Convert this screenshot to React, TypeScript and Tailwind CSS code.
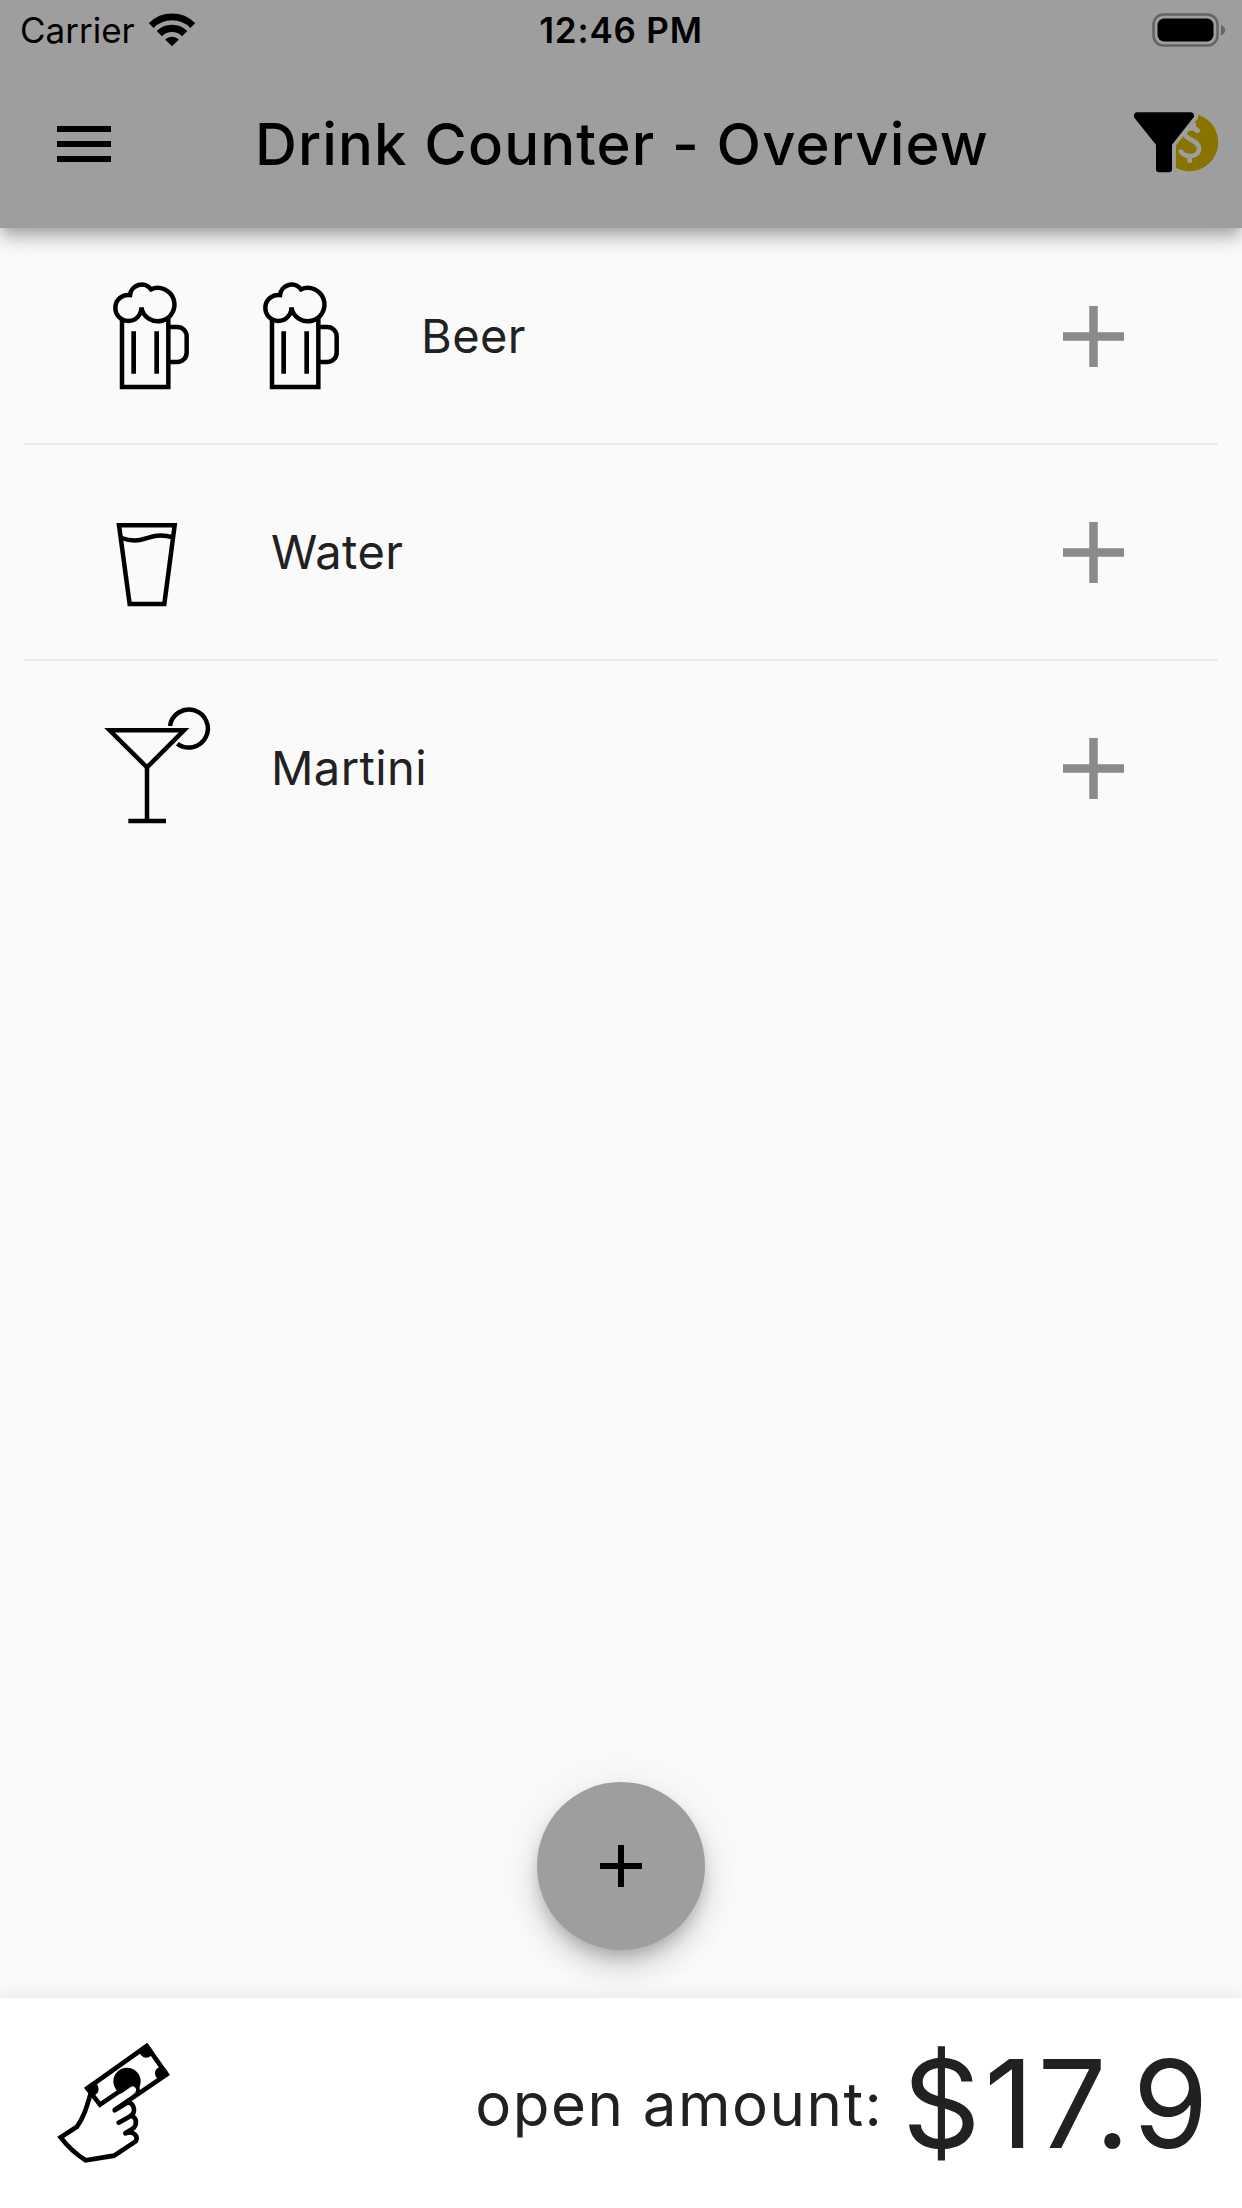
import type { ReactNode } from 'react';

const Wifi = () => (
  <svg width="46" height="34" viewBox="447 38 138 102" fill="none" stroke="black">
    <path d="M453.700 75.700A88 88 0 0 1 578.300 75.700" strokeWidth="20" />
    <path d="M478 100A53.700 53.700 0 0 1 554 100" strokeWidth="22" />
    <path d="M516 138L495.500 117.500A29 29 0 0 1 536.500 117.500Z" fill="black" stroke="none" />
  </svg>
);

const Battery = () => (
  <svg width="74" height="34" viewBox="0 0 74 34">
    <rect x="1.500" y="1.500" width="64" height="31" rx="10" fill="none" stroke="#646464" strokeWidth="2.500" />
    <rect x="5.500" y="5.500" width="56" height="23" rx="6.500" fill="black" />
    <path d="M69 12C74.500 14 74.500 20.500 69 22.500Z" fill="#646464" />
  </svg>
);

const FilterPaid = () => (
  <svg width="87" height="62" viewBox="66 68 261 186" className="overflow-visible">
    <path d="M262 73A87 87 0 1 1 195 233V165L258 88Q262 82 262 73Z" fill="#8a7400" />
    <path
      d="M263 126C255 110 232 110 223 121C212 151 263 143 264 176C263 204 212 203 208 178M236 197V217M248 98V114"
      fill="none"
      stroke="#9e9e9e"
      strokeWidth="14"
    />
    <path
      d="M78 66H240Q250 67 249 79L183 163V237Q183 246 174 246H144Q135 246 135 237V163L70 82Q65 68 78 66Z"
      fill="black"
    />
  </svg>
);

const Beer = () => (
  <svg width="150" height="150" viewBox="0 3 450 450" fill="none" stroke="black" strokeWidth="13.500">
    <path d="M96 176V381H235V170" />
    <path d="M235 201H262A28 28 0 0 1 290 229V278A28 28 0 0 1 262 306H235" />
    <path d="M131 214V341M200 214V341" strokeWidth="14" />
    <path d="M154 142A39 39 0 1 1 120 105A35 35 0 0 1 183 88A50 50 0 1 1 154 142Z" />
  </svg>
);

const Water = () => (
  <svg width="150" height="150" viewBox="0 -39 450 450" fill="none" stroke="black" strokeWidth="13.500">
    <path d="M87 106H254L223 342H119Z" />
    <path d="M95 144C115 151 142 154 165 146C190 138 212 132 249 142" />
  </svg>
);

const Martini = () => (
  <svg width="150" height="150" viewBox="0 9 450 450" fill="none" stroke="black" strokeWidth="13.500">
    <path d="M59 121H282L171 232Z" />
    <path d="M171 230V392M115 393H228" />
    <path d="M240 108A57 57 0 1 1 262 161" />
  </svg>
);

const PayHand = () => (
  <svg width="150" height="160" viewBox="0 9 450 480" fill="none" stroke="black" strokeWidth="14">
    <clipPath id="bill">
      <path d="M133 203L322 69L389 164L180 262Z" />
    </clipPath>
    <g clipPath="url(#bill)" fill="black" stroke="none">
      <circle cx="156" cy="207" r="20" />
      <circle cx="319" cy="93" r="20" />
      <circle cx="365" cy="160" r="20" />
    </g>
    <path d="M222 271L380 163L320 78L142 205L180 254L246 209" />
    <circle cx="261" cy="184" r="41" fill="black" stroke="none" />
    <path d="M290 190L294 220" />
    <path d="M225 246L278 209" stroke="white" strokeWidth="20" strokeLinecap="round" />
    <path
      d="M224 271L264 247C284 252 288 277 272 288L236 308M272 287C292 292 292 316 278 326L256 340"
      strokeLinecap="round"
    />
    <path
      d="M258 339C280 331 297 350 287 364L222 407L137 421C106 401 84 381 62 352L111 320C132 291 140 262 154 214"
      strokeLinecap="round"
    />
  </svg>
);

const Plus = ({ size, width }: { size: number; width: number }) => (
  <svg width={size} height={size} viewBox={`0 0 ${size} ${size}`} stroke="currentColor" strokeWidth={width}>
    <path d={`M0 ${size / 2}H${size}M${size / 2} 0V${size}`} />
  </svg>
);

function DrinkRow({ name, children, last }: { name: string; children: ReactNode; last?: boolean }) {
  return (
    <li className="relative flex h-[216px] items-center pl-[90px] pr-[118px]">
      {children}
      <span className="ml-[31px] grow text-[47px] tracking-[0.4px] text-[#212121]">{name}</span>
      <button className="mt-px text-[#8a8a8a]">
        <Plus size={61} width={8.5} />
      </button>
      {!last && <div className="absolute -bottom-px left-6 right-6 h-0.5 bg-[#ebebeb]" />}
    </li>
  );
}

export default function App() {
  return (
    <div className="flex h-[2208px] w-[1242px] flex-col overflow-hidden bg-[#fafafa] font-['Inter',sans-serif] text-black">
      <header className="relative z-10 h-[228px] bg-[#9e9e9e] shadow-[0_6px_12px_-3px_rgba(0,0,0,0.2),0_12px_15px_0_rgba(0,0,0,0.14),0_3px_30px_0_rgba(0,0,0,0.12)]">
        <div className="grid h-[60px] grid-cols-3 items-center px-4">
          <div className="ml-1 flex items-center gap-3.5">
            <span className="text-[35px] leading-[60px]">Carrier</span>
            <Wifi />
          </div>
          <span className="text-center text-[35px] font-semibold leading-[60px] tracking-[0.8px]">12:46 PM</span>
          <div className="flex justify-end">
            <Battery />
          </div>
        </div>
        <div className="flex h-[168px] items-center justify-between pl-[57px] pr-[22px]">
          <button className="flex w-[54px] flex-col gap-[9px]">
            <span className="h-1.5 bg-black" />
            <span className="h-1.5 bg-black" />
            <span className="h-1.5 bg-black" />
          </button>
          <h1 className="text-[58px] font-medium tracking-[1.15px]">Drink Counter - Overview</h1>
          <FilterPaid />
        </div>
      </header>

      <main className="flex grow flex-col items-center justify-between pb-12">
        <ul className="w-full">
          <DrinkRow name="Beer">
            <Beer />
            <Beer />
          </DrinkRow>
          <DrinkRow name="Water">
            <Water />
          </DrinkRow>
          <DrinkRow name="Martini" last>
            <Martini />
          </DrinkRow>
        </ul>
        <button className="flex size-[168px] items-center justify-center rounded-full bg-[#9e9e9e] shadow-[0_9px_15px_-3px_rgba(0,0,0,0.2),0_18px_30px_0_rgba(0,0,0,0.14),0_3px_54px_0_rgba(0,0,0,0.06)]">
          <Plus size={42} width={6} />
        </button>
      </main>

      <footer className="relative flex h-[210px] items-center justify-between bg-white pl-10 pr-[30px] text-[#212121] shadow-[0_0_18px_rgba(0,0,0,0.1)]">
        <PayHand />
        <div className="flex items-center pt-0.5">
          <span className="text-[60px] tracking-[1.5px]">open amount:</span>
          <span className="ml-[19px] text-[122px] leading-[208px] tracking-[3.6px]">$17.9</span>
        </div>
      </footer>
    </div>
  );
}
